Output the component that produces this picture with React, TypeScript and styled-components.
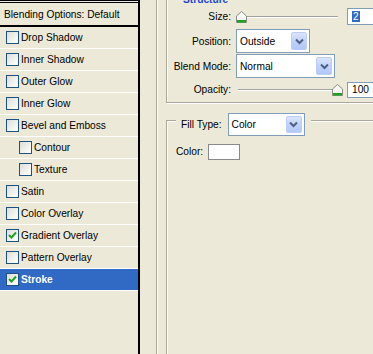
import React from 'react'
import styled, { createGlobalStyle } from 'styled-components'

const GlobalStyle = createGlobalStyle`
  html, body {
    margin: 0;
    padding: 0;
    background: #ece9d8;
    overflow: hidden;
  }
  body {
    font-family: "Liberation Sans", Arial, sans-serif;
    font-size: 10.2px;
    color: #000;
  }
`

const Dialog = styled.div`
  display: flex;
  width: 373px;
  height: 354px;
  overflow: hidden;
  background: #ece9d8;
`

const StyleList = styled.ul`
  flex-shrink: 0;
  width: 138px;
  margin: 0;
  padding: 0;
  list-style: none;
  border-right: 2px solid #000;
`

const ListHeader = styled.li`
  display: flex;
  align-items: center;
  height: 22px;
  padding-left: 4px;
  border-top: 3px double #000;
  border-bottom: 2px solid #000;
`

const ListItem = styled.li<{ $indent?: boolean; $selected?: boolean }>`
  display: flex;
  align-items: center;
  gap: 2px;
  height: 21px;
  padding-left: ${p => (p.$indent ? '19px' : '6px')};
  border-bottom: 1px solid #fff;
  background: ${p => (p.$selected ? '#316ac5' : 'transparent')};
  color: ${p => (p.$selected ? '#fff' : '#000')};
  font-weight: ${p => (p.$selected ? 'bold' : 'normal')};
`

const Box = styled.span`
  display: inline-flex;
  align-items: center;
  justify-content: center;
  box-sizing: border-box;
  width: 13px;
  height: 13px;
  border: 1px solid #1c5180;
  background: linear-gradient(135deg, #dcdcd7 0%, #f6f6f4 70%, #fff 100%);
`

const Main = styled.div`
  flex: none;
  width: 260px;
  margin-left: 16px;
  padding-left: 9px;
  border-left: 1px solid #aca899;
  box-shadow: inset 1px 0 0 #fff;
`

const Group = styled.div<{ $top: number }>`
  margin-top: ${p => p.$top}px;
  border: 1px solid #aca899;
  box-shadow: inset 1px 1px 0 #fff, 1px 1px 0 #fff;
`

const Legend = styled.div<{ $lift: number; $left: number }>`
  display: flex;
  align-items: center;
  gap: 6px;
  width: max-content;
  margin-top: ${p => -p.$lift}px;
  margin-left: ${p => p.$left}px;
  padding: 0 6px 0 5px;
  background: #ece9d8;
`

const LegendTitle = styled.span`
  line-height: 13px;
  color: #1a46d0;
  font-weight: bold;
  padding: 0 2px;
`

const Row = styled.div<{ $h: number; $gap: number }>`
  display: grid;
  grid-template-columns: 64px auto;
  column-gap: 5px;
  align-items: center;
  height: ${p => p.$h}px;
  margin-top: ${p => p.$gap}px;
`

const Label = styled.span`
  text-align: right;
  white-space: nowrap;
`

const Controls = styled.div`
  display: flex;
  align-items: center;
`

const Combo = styled.div<{ $w: number; $h: number }>`
  display: flex;
  align-items: center;
  box-sizing: border-box;
  width: ${p => p.$w}px;
  height: ${p => p.$h}px;
  padding: 2px;
  border: 1px solid #7f9db9;
  background: #fff;
`

const ComboText = styled.span`
  flex: 1;
  padding-left: 1px;
`

const ComboButton = styled.span`
  display: flex;
  align-items: center;
  justify-content: center;
  box-sizing: border-box;
  width: 16px;
  height: 100%;
  border: 1px solid #bccef6;
  border-radius: 2px;
  background: linear-gradient(180deg, #dae5fd 0%, #c0d2fa 50%, #b2c8f7 100%);
`

const Track = styled.div<{ $w: number; $end?: boolean }>`
  position: relative;
  width: ${p => p.$w}px;
  height: 11px;
  margin-left: 2px;
  display: flex;
  align-items: center;
  justify-content: ${p => (p.$end ? 'flex-end' : 'flex-start')};
  &::before {
    content: '';
    position: absolute;
    left: 0;
    right: 0;
    top: 5px;
    height: 1px;
    background: #a2a2a0;
    box-shadow: 0 1px 0 #fff;
  }
`

const ThumbWrap = styled.span<{ $shift: number }>`
  position: relative;
  display: flex;
  margin: 0 ${p => -p.$shift}px 0 ${p => p.$shift}px;
`

const NumberBox = styled.div<{ $gap: number; $h: number }>`
  display: flex;
  align-items: center;
  flex-shrink: 0;
  box-sizing: border-box;
  width: 50px;
  height: ${p => p.$h}px;
  margin-left: ${p => p.$gap}px;
  padding-left: 4px;
  border: 1px solid #7f9db9;
  background: #fff;
`

const Selected = styled.span`
  background: #316ac5;
  color: #fff;
  padding: 0 1px;
`

const Swatch = styled.span`
  box-sizing: border-box;
  width: 32px;
  height: 16px;
  border: 1px solid #8a8a8a;
  background: #fff;
`

const FillBody = styled.div`
  display: flex;
  align-items: center;
  gap: 5px;
  height: 260px;
  align-items: flex-start;
  padding: 8px 0 0 9px;
`

const Check = () => (
  <svg width="9" height="9" viewBox="0 0 9 9">
    <path d="M1 4 L3.5 6.5 L8 1.5" fill="none" stroke="#21a121" strokeWidth="2" />
  </svg>
)

const Chevron = () => (
  <svg width="9" height="7" viewBox="0 0 9 7">
    <path d="M1 1.5 L4.5 5 L8 1.5" fill="none" stroke="#4d6185" strokeWidth="2" />
  </svg>
)

const Thumb = () => (
  <svg width="11" height="12" viewBox="0 0 11 12">
    <path d="M5.5 0.5 L10.5 5 L10.5 11.5 L0.5 11.5 L0.5 5 Z" fill="#f7f7f4" stroke="#8c8c88" />
    <rect x="1" y="9" width="9" height="2.5" fill="#21a121" />
  </svg>
)

const styles = [
  { name: 'Drop Shadow' },
  { name: 'Inner Shadow' },
  { name: 'Outer Glow' },
  { name: 'Inner Glow' },
  { name: 'Bevel and Emboss' },
  { name: 'Contour', indent: true },
  { name: 'Texture', indent: true },
  { name: 'Satin' },
  { name: 'Color Overlay' },
  { name: 'Gradient Overlay', checked: true },
  { name: 'Pattern Overlay' },
  { name: 'Stroke', checked: true, selected: true },
]

export default function App() {
  return (
    <>
      <GlobalStyle />
      <Dialog>
        <StyleList>
          <ListHeader>Blending Options: Default</ListHeader>
          {styles.map(s => (
            <ListItem key={s.name} $indent={s.indent} $selected={s.selected}>
              <Box>{s.checked && <Check />}</Box>
              {s.name}
            </ListItem>
          ))}
        </StyleList>
        <Main>
          <Group $top={-2}>
            <Legend $lift={6} $left={9}>
              <LegendTitle>Structure</LegendTitle>
            </Legend>
            <Row $h={17} $gap={2}>
              <Label>Size:</Label>
              <Controls>
                <Track $w={100}>
                  <ThumbWrap $shift={-2}><Thumb /></ThumbWrap>
                </Track>
                <NumberBox $gap={9} $h={17}>
                  <Selected>2</Selected>
                </NumberBox>
              </Controls>
            </Row>
            <Row $h={24} $gap={4}>
              <Label>Position:</Label>
              <Controls>
                <Combo $w={74} $h={24}>
                  <ComboText>Outside</ComboText>
                  <ComboButton><Chevron /></ComboButton>
                </Combo>
              </Controls>
            </Row>
            <Row $h={24} $gap={1}>
              <Label>Blend Mode:</Label>
              <Controls>
                <Combo $w={99} $h={24}>
                  <ComboText>Normal</ComboText>
                  <ComboButton><Chevron /></ComboButton>
                </Combo>
              </Controls>
            </Row>
            <Row $h={17} $gap={3}>
              <Label>Opacity:</Label>
              <Controls>
                <Track $w={100} $end>
                  <ThumbWrap $shift={5}><Thumb /></ThumbWrap>
                </Track>
                <NumberBox $gap={9} $h={16}>100</NumberBox>
              </Controls>
            </Row>
            <div style={{ height: 4 }} />
          </Group>
          <Group $top={17}>
            <Legend $lift={8} $left={9}>
              <span>Fill Type:</span>
              <Combo $w={77} $h={23}>
                <ComboText>Color</ComboText>
                <ComboButton><Chevron /></ComboButton>
              </Combo>
            </Legend>
            <FillBody>
              <Label style={{ lineHeight: '16px' }}>Color:</Label>
              <Swatch />
            </FillBody>
          </Group>
        </Main>
      </Dialog>
    </>
  )
}
